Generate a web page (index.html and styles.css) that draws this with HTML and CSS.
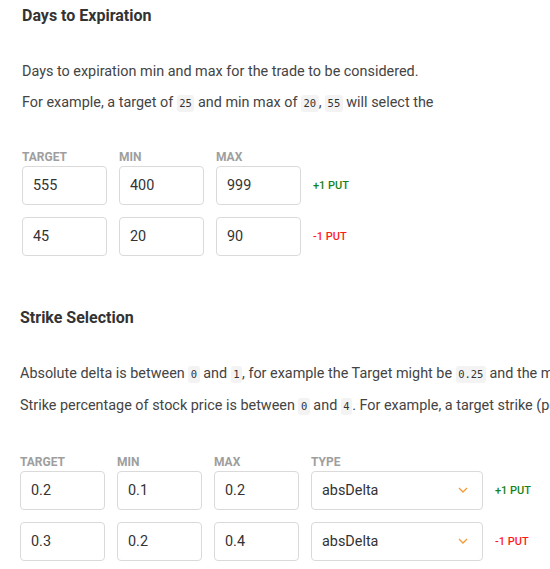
FILE: index.html
```html
<!DOCTYPE html>
<html lang="en">
<head>
    <meta charset="UTF-8">
    <meta name="viewport" content="width=device-width, initial-scale=1.0">
    <title>Trade Settings</title>
    <link rel="stylesheet" href="styles.css">
</head>
<body>

    <div class="page">
        <div class="section section-days">
            <h2>Days to Expiration</h2>
            <p>Days to expiration min and max for the trade to be considered.</p>
            <p>For example, a target of <code>25</code> and min max of <code>20</code>, <code>55</code> will select the</p>

            <div class="fields">
                <div class="row">
                    <span class="label">TARGET</span>
                    <span class="label">MIN</span>
                    <span class="label">MAX</span>
                </div>
                <div class="row">
                    <input class="field" type="text" value="555">
                    <input class="field" type="text" value="400">
                    <input class="field" type="text" value="999">
                    <span class="leg long">+1 PUT</span>
                </div>
                <div class="row">
                    <input class="field" type="text" value="45">
                    <input class="field" type="text" value="20">
                    <input class="field" type="text" value="90">
                    <span class="leg short">-1 PUT</span>
                </div>
            </div>
        </div>

        <div class="section">
            <h2>Strike Selection</h2>
            <p class="wide">Absolute delta is between <code>0</code> and <code>1</code>, for example the Target might be <code>0.25</code> and the min and max <code>0.2</code> and <code>0.3</code>.</p>
            <p class="wide">Strike percentage of stock price is between <code>0</code> and <code>4</code>. For example, a target strike (percent of stock price) of 1.05 is five percent above it.</p>

            <div class="fields fields-strike">
                <div class="row row-type">
                    <span class="label">TARGET</span>
                    <span class="label">MIN</span>
                    <span class="label">MAX</span>
                    <span class="label">TYPE</span>
                </div>
                <div class="row row-type">
                    <input class="field" type="text" value="0.2">
                    <input class="field" type="text" value="0.1">
                    <input class="field" type="text" value="0.2">
                    <div class="select">
                        <span>absDelta</span>
                        <svg width="10" height="6" viewBox="0 0 10 6"><path d="M1 1l4 4 4-4" fill="none" stroke="#f29b38" stroke-width="1.3"/></svg>
                    </div>
                    <span class="leg long">+1 PUT</span>
                </div>
                <div class="row row-type">
                    <input class="field" type="text" value="0.3">
                    <input class="field" type="text" value="0.2">
                    <input class="field" type="text" value="0.4">
                    <div class="select">
                        <span>absDelta</span>
                        <svg width="10" height="6" viewBox="0 0 10 6"><path d="M1 1l4 4 4-4" fill="none" stroke="#f29b38" stroke-width="1.3"/></svg>
                    </div>
                    <span class="leg short">-1 PUT</span>
                </div>
            </div>
        </div>
    </div>

</body>
</html>
```

FILE: styles.css
```css
body {
    margin: 0;
    font-family: Roboto, "Liberation Sans", sans-serif;
    color: #444444;
    background: #ffffff;
    overflow-x: hidden;
}
.page {
    padding: 6px 0 0 20px;
}
.section-days {
    margin-left: 2px;
    margin-bottom: 52px;
}
h2 {
    margin: 0 0 38px;
    font-size: 16px;
    font-weight: bold;
    color: #333333;
}
p {
    margin: 0 0 14px;
    font-size: 0.9rem;
}
.wide {
    white-space: nowrap;
}
code {
    display: inline-block;
    padding: 0 2.5px;
    font-family: "DejaVu Sans Mono", monospace;
    font-size: 10.5px;
    line-height: 17px;
    color: #333333;
    background: #f3f3f3;
    border-radius: 3px;
}
.fields {
    margin-top: 37.5px;
    display: flex;
    flex-direction: column;
    gap: 12px;
}
.fields-strike {
    margin-top: 40px;
}
.fields .row:first-child {
    margin-bottom: -10px;
}
.row {
    display: grid;
    grid-template-columns: repeat(3, 85px) auto;
    column-gap: 12px;
    align-items: center;
}
.row-type {
    grid-template-columns: repeat(3, 85px) 172px auto;
}
.label {
    font-size: 12px;
    font-weight: bold;
    color: #9e9e9e;
}
.field,
.select {
    box-sizing: border-box;
    height: 39px;
    padding: 0 10px;
    font-family: Roboto, "Liberation Sans", sans-serif;
    font-size: 0.9rem;
    color: #333333;
    border: 1px solid #dadada;
    border-radius: 4px;
    background: #ffffff;
}
.field {
    width: 85px;
}
.select {
    display: flex;
    align-items: center;
    justify-content: space-between;
    padding-right: 14px;
}
.leg {
    font-size: 11px;
    font-weight: 500;
}
.long {
    color: #178217;
}
.short {
    color: #ff1a1a;
}
```
